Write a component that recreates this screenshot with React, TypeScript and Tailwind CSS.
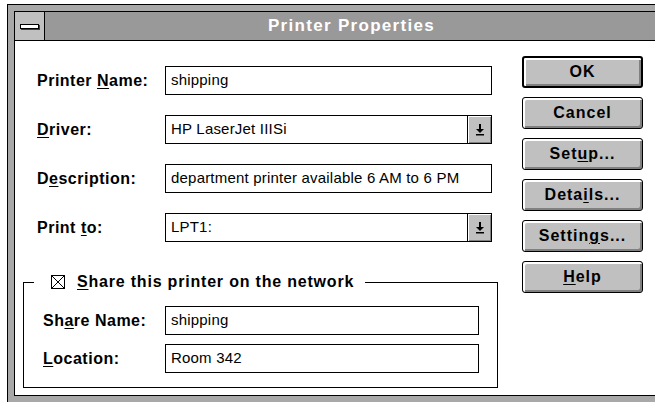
import React from "react";

const font = { fontFamily: '"Liberation Sans", Arial, sans-serif' };

function Key({ children }: { children: React.ReactNode }) {
  return <span className="underline underline-offset-[2px] decoration-1">{children}</span>;
}

function DropArrow() {
  return (
    <svg width="10" height="13" viewBox="0 0 10 13">
      <rect x="4" y="1" width="2" height="5" fill="#000" />
      <polygon points="1,6 9,6 5,10" fill="#000" />
      <rect x="1" y="11" width="8" height="1.5" fill="#000" />
    </svg>
  );
}

function TextBox({ value, width, combo }: { value: string; width: string; combo?: boolean }) {
  return (
    <div className={`${width} h-[29px] border border-black bg-white flex items-stretch`}>
      <div className="flex-1 flex items-center pl-[5px] text-[15px] tracking-[0.2px] text-black whitespace-nowrap overflow-hidden">
        {value}
      </div>
      {combo && (
        <div className="w-[24px] border-l border-black bg-[#c0c0c0] shadow-[inset_1px_1px_0_#fff,inset_-1px_-1px_0_#808080] flex items-center justify-center">
          <DropArrow />
        </div>
      )}
    </div>
  );
}

function Field({ label, children, labelW }: { label: React.ReactNode; children: React.ReactNode; labelW: string }) {
  return (
    <div className="flex items-center h-[29px]">
      <div className={`${labelW} text-[16px] font-bold tracking-[0.5px] text-black`}>{label}</div>
      {children}
    </div>
  );
}

function Button({ children, primary }: { children: React.ReactNode; primary?: boolean }) {
  return (
    <button
      className={`w-[121px] h-[32px] bg-[#c0c0c0] rounded-[3px] ${
        primary ? "border-2" : "border"
      } border-black shadow-[inset_2px_2px_0_#fff,inset_-2px_-2px_0_#808080] text-[16px] font-bold tracking-[1px] text-black flex items-center justify-center`}
    >
      {children}
    </button>
  );
}

export default function App() {
  return (
    <div className="w-[655px] h-[402px] bg-white overflow-hidden" style={font}>
      {/* window frame */}
      <div className="ml-[7px] mt-[4px] w-[659px] border border-black bg-[#a8a8a8] p-[6px]">
        <div className="border border-black bg-white">
          {/* caption */}
          <div className="flex h-[29px] border-b border-black">
            <div className="w-[30px] bg-[#c0c0c0] border-r border-black flex items-center justify-center">
              <div className="w-[19px] h-[5px] bg-white border border-black shadow-[1px_1px_0_#404040]" />
            </div>
            <div className="flex-1 bg-[#999999] flex items-center justify-center text-white text-[17px] font-bold tracking-[1.3px]">
              Printer Properties
            </div>
          </div>

          {/* client area */}
          <div className="h-[354px] flex pt-[15px]">
            <div className="ml-[8px] w-[475px] pt-[10px]">
              <div className="pl-[14px] flex flex-col gap-[20px]">
                <Field labelW="w-[128px]" label={<>Printer <Key>N</Key>ame:</>}>
                  <TextBox value="shipping" width="w-[327px]" />
                </Field>
                <Field labelW="w-[128px]" label={<><Key>D</Key>river:</>}>
                  <TextBox value="HP LaserJet IIISi" width="w-[327px]" combo />
                </Field>
                <Field labelW="w-[128px]" label={<>D<Key>e</Key>scription:</>}>
                  <TextBox value="department printer available 6 AM to 6 PM" width="w-[327px]" />
                </Field>
                <Field labelW="w-[128px]" label={<>Print <Key>t</Key>o:</>}>
                  <TextBox value="LPT1:" width="w-[327px]" combo />
                </Field>
              </div>

              <fieldset className="mt-[31px] w-[475px] border border-black pb-[14px]">
                <legend className="ml-[10px] pl-[17px] pr-[11px] h-[18px] leading-[18px] flex items-center gap-[12px] text-[16px] font-bold tracking-[0.8px] text-black">
                  <svg width="14" height="14" viewBox="0 0 14 14">
                    <rect x="0.5" y="0.5" width="13" height="13" fill="#fff" stroke="#000" />
                    <path d="M1 1 L13 13 M13 1 L1 13" stroke="#000" strokeWidth="1" />
                  </svg>
                  <span>
                    <Key>S</Key>hare this printer on the network
                  </span>
                </legend>
                <div className="pt-[15px] pl-[19px] flex flex-col gap-[9px]">
                  <Field labelW="w-[122px]" label={<>Sh<Key>a</Key>re Name:</>}>
                    <TextBox value="shipping" width="w-[314px]" />
                  </Field>
                  <Field labelW="w-[122px]" label={<><Key>L</Key>ocation:</>}>
                    <TextBox value="Room 342" width="w-[314px]" />
                  </Field>
                </div>
              </fieldset>
            </div>

            <div className="ml-[24px] flex flex-col gap-[9px]">
              <Button primary>OK</Button>
              <Button>Cancel</Button>
              <Button>
                Set<Key>u</Key>p...
              </Button>
              <Button>
                Deta<Key>i</Key>ls...
              </Button>
              <Button>
                Settin<Key>g</Key>s...
              </Button>
              <Button>
                <Key>H</Key>elp
              </Button>
            </div>
          </div>
        </div>
      </div>
    </div>
  );
}
